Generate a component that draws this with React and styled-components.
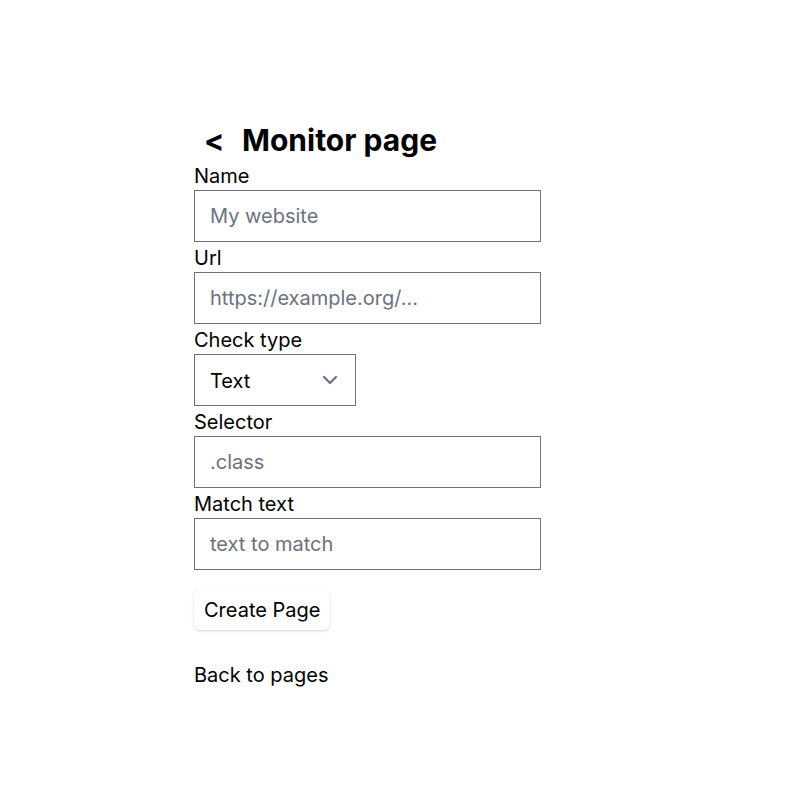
import React from "react";
import styled, { createGlobalStyle } from "styled-components";

const GlobalStyle = createGlobalStyle`
  html, body {
    margin: 0;
    padding: 0;
    background: #ffffff;
    font-family: Inter, "Noto Sans", sans-serif;
    color: #000000;
  }
  * { box-sizing: border-box; }
`;

let Page = styled.div`
  padding: 122px 0 0 194px;
  width: 811px;
  min-height: 801px;
`;

let Form = styled.form`
  display: flex;
  flex-direction: column;
  width: 347px;
`;

let TitleRow = styled.div`
  display: flex;
  align-items: center;
  height: 36px;
  margin-bottom: 2px;
`;

let BackButton = styled.button`
  border: none;
  background: none;
  padding: 0 0 0 10px;
  width: 48px;
  text-align: left;
  font-family: Inter, sans-serif;
  font-weight: 700;
  font-size: 30px;
  line-height: 36px;
  color: #000;
  cursor: pointer;
`;

let Title = styled.h1`
  margin: 0;
  font-size: 30px;
  line-height: 36px;
  font-weight: 700;
`;

let Label = styled.label`
  display: block;
  font-size: 20px;
  line-height: 28px;
  height: 30px;
  padding-top: 2px;
`;

let Input = styled.input`
  display: block;
  width: 347px;
  height: 52px;
  padding: 12px 15px;
  border: 1px solid #6b7280;
  border-radius: 0;
  font-family: Inter, sans-serif;
  font-size: 20px;
  line-height: 28px;
  color: #111827;
  outline: none;
  &::placeholder {
    color: #6b7280;
  }
`;

let SelectWrap = styled.div`
  position: relative;
  width: 162px;
`;

let Select = styled.select`
  appearance: none;
  display: block;
  width: 162px;
  height: 52px;
  padding: 12px 40px 12px 15px;
  border: 1px solid #6b7280;
  border-radius: 0;
  background: #fff;
  font-family: Inter, sans-serif;
  font-size: 20px;
  line-height: 28px;
  color: #000;
`;

let Chevron = styled.svg`
  position: absolute;
  right: 11px;
  top: 11px;
  pointer-events: none;
`;

let Button = styled.button`
  align-self: flex-start;
  margin-top: 20px;
  height: 40px;
  padding: 0 10px;
  border: none;
  border-radius: 6px;
  background: #fff;
  box-shadow: 0 1px 3px rgba(0, 0, 0, 0.12), 0 1px 2px rgba(0, 0, 0, 0.06);
  font-family: Inter, sans-serif;
  font-size: 20px;
  line-height: 28px;
  color: #000;
`;

let BackLink = styled.a`
  display: block;
  margin-top: 31px;
  font-size: 20px;
  line-height: 28px;
  color: #000;
  text-decoration: none;
`;

const App = () => {
  return (
    <Page>
      <GlobalStyle />
      <Form onSubmit={(e) => e.preventDefault()}>
        <TitleRow>
          <BackButton type="button">&lt;</BackButton>
          <Title>Monitor page</Title>
        </TitleRow>
        <Label>Name</Label>
        <Input placeholder="My website" />
        <Label>Url</Label>
        <Input placeholder="https://example.org/..." />
        <Label>Check type</Label>
        <SelectWrap>
          <Select defaultValue="text">
            <option value="text">Text</option>
          </Select>
          <Chevron width="30" height="30" viewBox="0 0 20 20" fill="none">
            <path
              d="M6 8l4 4 4-4"
              stroke="#6b7280"
              strokeWidth="1.5"
              strokeLinecap="round"
              strokeLinejoin="round"
            />
          </Chevron>
        </SelectWrap>
        <Label>Selector</Label>
        <Input placeholder=".class" />
        <Label>Match text</Label>
        <Input placeholder="text to match" />
        <Button type="submit">Create Page</Button>
        <BackLink href="#">Back to pages</BackLink>
      </Form>
    </Page>
  );
};

export default App;
